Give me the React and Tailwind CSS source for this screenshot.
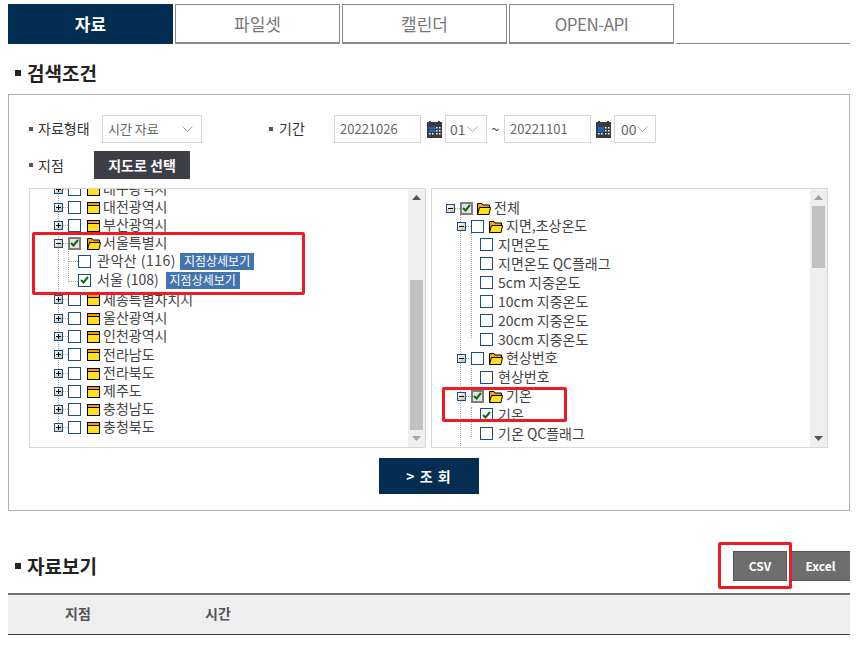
import React from "react";

const font = { fontFamily: '"Noto Sans CJK KR", "Noto Sans", sans-serif' };

function Bullet({ big }) {
  return <span className={big ? "w-[6px] h-[6px] bg-[#222] shrink-0" : "w-1 h-1 bg-[#555] shrink-0"} />;
}

function Chevron() {
  return (
    <svg width="11" height="7" viewBox="0 0 11 7" className="shrink-0">
      <path d="M0.5 0.5 L5.5 5.5 L10.5 0.5" fill="none" stroke="#a8a8a8" strokeWidth="1" />
    </svg>
  );
}

function Calendar() {
  return (
    <svg width="15" height="17" viewBox="0 0 15 17" className="shrink-0">
      <rect x="0" y="1" width="15" height="16" fill="#3a3a42" />
      <rect x="2" y="0" width="2" height="3" fill="#3a3a42" />
      <rect x="11" y="0" width="2" height="3" fill="#3a3a42" />
      <rect x="2" y="6" width="6" height="5" fill="#1e6fd9" />
      <path d="M4 6v5M6 6v5M2 8.5h6" stroke="#0c4aa0" strokeWidth="0.6" />
      <path d="M9 6h1.5v1.5H9zM12 6h1.5v1.5H12zM9 9h1.5v1.5H9zM12 9h1.5v1.5H12zM2 12h1.5v1.5H2zM5 12h1.5v1.5H5zM9 12h1.5v1.5H9zM12 12h1.5v1.5H12z" fill="#fff" />
    </svg>
  );
}

function Expander({ open }) {
  return (
    <span className="relative w-[9px] h-[9px] shrink-0 border border-[#1a4f7f] bg-gradient-to-br from-white to-[#c9bda5] flex items-center justify-center">
      <span className="absolute w-[5px] h-px bg-black" />
      {!open && <span className="absolute w-px h-[5px] bg-black" />}
    </span>
  );
}

function Check({ state }) {
  if (state === "partial") {
    return (
      <span className="w-[13px] h-[13px] shrink-0 border-2 border-[#7d7d7d] bg-[#e4e4e4] flex items-center justify-center">
        <svg width="9" height="8" viewBox="0 0 9 8">
          <path d="M1 4 L3.5 6.5 L8 1" fill="none" stroke="#0a6a14" strokeWidth="2" />
        </svg>
      </span>
    );
  }
  return (
    <span className="w-[13px] h-[13px] shrink-0 border border-[#1a4f7f] bg-white flex items-center justify-center">
      {state === "on" && (
        <svg width="9" height="8" viewBox="0 0 9 8">
          <path d="M1 4 L3.5 6.5 L8 1" fill="none" stroke="#0a6a14" strokeWidth="2" />
        </svg>
      )}
    </span>
  );
}

function Folder({ open }) {
  if (open) {
    return (
      <svg width="14" height="13" viewBox="0 0 14 13" className="shrink-0">
        <path d="M0.5 12.5 V1.5 H5 L6 3 H12.5 V5" fill="#ffa500" stroke="#000" />
        <path d="M0.5 12.5 L2.5 5.5 H13.5 L12 12.5 Z" fill="#ffe01a" stroke="#000" />
      </svg>
    );
  }
  return (
    <svg width="14" height="13" viewBox="0 0 14 13" className="shrink-0">
      <rect x="0" y="1" width="13" height="12" fill="#000" />
      <rect x="1" y="2" width="11" height="2" fill="#ff9a00" />
      <rect x="1" y="5" width="11" height="7" fill="#ffe01a" />
    </svg>
  );
}

function Badge({ className }) {
  return (
    <span className={"h-[17px] w-[74px] bg-[#4474ae] text-white text-xs leading-none flex items-center justify-center " + className}>
      지점상세보기
    </span>
  );
}

function Scrollbar({ thumb, upFill, downFill }) {
  return (
    <div className="w-[17px] shrink-0 bg-[#efefef] flex flex-col items-center">
      <div className="h-[17px] flex items-center justify-center shrink-0">
        <svg width="9" height="5" viewBox="0 0 9 5"><path d="M4.5 0 L9 5 H0 Z" fill={upFill} /></svg>
      </div>
      <div className={"w-[13px] bg-[#c1c1c1] " + thumb} />
      <div className="mt-auto h-[17px] flex items-center justify-center shrink-0">
        <svg width="9" height="5" viewBox="0 0 9 5"><path d="M0 0 H9 L4.5 5 Z" fill={downFill} /></svg>
      </div>
    </div>
  );
}

function SidoRow({ name, open, check, h = "h-[18px]" }) {
  return (
    <div className={"flex items-center pl-6 " + h}>
      <Expander open={open} />
      <span className="w-[5px] h-0 border-t border-dotted border-[#aaa]" />
      <Check state={check} />
      <span className="w-[6px]" />
      <Folder open={open} />
      <span className="ml-[2px] mb-[2px] text-sm leading-4 whitespace-nowrap">{name}</span>
    </div>
  );
}

function StationRow({ name, check, h, nameClass, badgeMargin }) {
  return (
    <div className={"flex items-center pl-[48px] " + h}>
      <Check state={check} />
      <span className={"ml-[6px] mb-[2px] text-sm leading-4 whitespace-nowrap " + nameClass}>{name}</span>
      <Badge className={badgeMargin} />
    </div>
  );
}

function GroupRow({ name, check, pad, gap, h = "h-[18px]" }) {
  return (
    <div className={"flex items-center " + pad + " " + h}>
      <Expander open />
      <span className="w-[5px] h-0 border-t border-dotted border-[#aaa]" />
      <Check state={check} />
      <span className={gap} />
      <Folder open />
      <span className="ml-[3px] mb-[2px] text-sm leading-4 whitespace-nowrap">{name}</span>
    </div>
  );
}

function LeafRow({ name, check, h = "h-[19px]" }) {
  return (
    <div className={"flex items-center pl-[48px] " + h}>
      <Check state={check} />
      <span className="ml-[5px] mb-[2px] text-sm leading-4 whitespace-nowrap">{name}</span>
    </div>
  );
}

function Tab({ label, active, textClass = "" }) {
  return (
    <div
      className={
        active
          ? "w-[165px] h-10 bg-[#032e51] text-white font-bold text-[17px] flex items-center justify-center"
          : "w-[165px] h-10 border border-[#8c8c8c] border-b-2 text-[#777] text-[17px] flex items-center justify-center"
      }
    >
      <span className={textClass}>{label}</span>
    </div>
  );
}

function RedBox({ className }) {
  return <div className={"absolute border-[3px] border-[#ed1c24] rounded-[2px] " + className} />;
}

export default function App() {
  return (
    <div className="relative w-[856px] h-[645px] overflow-hidden bg-white pl-2 pr-[6px] pt-1 text-[#444]" style={font}>
      {/* tabs */}
      <div className="flex gap-[2px]">
        <Tab label="자료" active />
        <Tab label="파일셋" />
        <Tab label="캘린더" />
        <Tab label="OPEN-API" textClass="tracking-[-0.5px]" />
        <div className="flex-1 h-10 border-b border-[#8c8c8c]" />
      </div>

      <div className="h-[50px] pt-2 pl-[7px] flex items-center gap-[6px]">
        <Bullet big />
        <h2 className="text-[19px] font-bold text-[#222]">검색조건</h2>
      </div>

      {/* search box */}
      <div className="border border-[#b0b0b0] h-[417px] pt-5 pl-5">
        <div className="flex items-center h-7 text-sm">
          <div className="w-[73px] flex items-center gap-[5px] text-[#333]">
            <Bullet />
            <span className="mb-[2px] leading-4">자료형태</span>
          </div>
          <div className="w-[100px] h-7 border border-[#d5d5d5] pl-[5px] pr-[8px] flex items-center justify-between text-[13px] text-[#666]">
            <span>시간 자료</span>
            <Chevron />
          </div>
          <div className="ml-[67px] w-[65px] flex items-center gap-[6px] text-[#333]">
            <Bullet />
            <span className="mb-[2px] leading-4">기간</span>
          </div>
          <div className="w-[87px] h-7 border border-[#d5d5d5] pl-[5px] flex items-center text-[13px] text-[#666]">20221026</div>
          <span className="ml-[6px]"><Calendar /></span>
          <div className="ml-[3px] w-[42px] h-7 border border-[#d5d5d5] pl-[4px] pr-[8px] flex items-center justify-between text-[#666]">
            <span>01</span>
            <Chevron />
          </div>
          <span className="w-[17px] text-center">~</span>
          <div className="w-[87px] h-7 border border-[#d5d5d5] pl-[5px] flex items-center text-[13px] text-[#666]">20221101</div>
          <span className="ml-[5px]"><Calendar /></span>
          <div className="ml-[3px] w-[42px] h-7 border border-[#d5d5d5] pl-[6px] pr-[8px] flex items-center justify-between text-[#666]">
            <span>00</span>
            <Chevron />
          </div>
        </div>

        <div className="flex items-center h-7 mt-2 text-sm">
          <div className="w-[65px] flex items-center gap-[5px] text-[#333]">
            <Bullet />
            <span className="leading-4">지점</span>
          </div>
          <button className="w-[96px] h-7 bg-[#3e3e46] text-white font-bold text-sm">지도로 선택</button>
        </div>

        {/* trees */}
        <div className="flex gap-[5px] mt-[9px] h-[260px]">
          <div className="relative w-[397px] border border-[#d8d8d8] flex overflow-hidden">
            <div className="relative flex-1 overflow-hidden">
              <div className="absolute left-[28px] top-0 h-[242px] border-l border-dotted border-[#aaa]" />
              <div className="absolute left-[38px] top-[62px] h-[31px] border-l border-dotted border-[#aaa]" />
              <div className="absolute left-[38px] top-[72px] w-[10px] border-t border-dotted border-[#aaa]" />
              <div className="absolute left-[38px] top-[92px] w-[10px] border-t border-dotted border-[#aaa]" />
              <div className="relative -mt-[9px]">
                <SidoRow name="대구광역시" />
                <SidoRow name="대전광역시" />
                <SidoRow name="부산광역시" />
                <SidoRow name="서울특별시" open check="partial" />
                <StationRow name="관악산 (116)" h="h-[18px]" nameClass="tracking-[0.5px]" badgeMargin="ml-[4px]" />
                <StationRow name="서울 (108)" check="on" h="h-[20px]" nameClass="" badgeMargin="ml-[7px]" />
                <SidoRow name="세종특별자치시" h="h-[19px]" />
                <SidoRow name="울산광역시" />
                <SidoRow name="인천광역시" />
                <SidoRow name="전라남도" h="h-[19px]" />
                <SidoRow name="전라북도" />
                <SidoRow name="제주도" />
                <SidoRow name="충청남도" />
                <SidoRow name="충청북도" />
              </div>
            </div>
            <Scrollbar thumb="mt-[74px] h-[150px]" upFill="#555" downFill="#a3a3a3" />
          </div>

          <div className="relative w-[397px] border border-[#d8d8d8] flex overflow-hidden">
            <div className="relative flex-1 overflow-hidden">
              <div className="absolute left-[28px] top-[23px] h-[240px] border-l border-dotted border-[#aaa]" />
              <div className="absolute left-[39px] top-[41px] h-[108px] border-l border-dotted border-[#aaa]" />
              <div className="absolute left-[39px] top-[179px] h-[17px] border-l border-dotted border-[#aaa]" />
              <div className="absolute left-[39px] top-[218px] h-[30px] border-l border-dotted border-[#aaa]" />
              <div className="relative pt-[10px]">
                <GroupRow name="전체" check="partial" pad="pl-[14px]" gap="w-[4px]" />
                <GroupRow name="지면,초상온도" pad="pl-[25px]" gap="w-[5px]" />
                <LeafRow name="지면온도" />
                <LeafRow name="지면온도 QC플래그" />
                <LeafRow name="5cm 지중온도" />
                <LeafRow name="10cm 지중온도" />
                <LeafRow name="20cm 지중온도" />
                <LeafRow name="30cm 지중온도" />
                <GroupRow name="현상번호" pad="pl-[25px]" gap="w-[5px]" />
                <LeafRow name="현상번호" h="h-[20px]" />
                <GroupRow name="기온" check="partial" pad="pl-[25px]" gap="w-[5px]" />
                <LeafRow name="기온" check="on" />
                <LeafRow name="기온 QC플래그" />
                <div className="h-[2px]" />
                <LeafRow name="최저기온" />
              </div>
            </div>
            <Scrollbar thumb="h-[62px]" upFill="#a3a3a3" downFill="#555" />
          </div>
        </div>

        <div className="flex justify-center mt-[10px] pr-5">
          <button className="w-[100px] h-9 bg-[#032e51] text-white font-bold text-sm tracking-[1px] whitespace-pre">{"> 조 회"}</button>
        </div>
      </div>

      {/* results */}
      <div className="mt-10 h-[30px] pl-[7px] flex items-center gap-[6px]">
        <Bullet big />
        <h2 className="text-[19px] font-bold text-[#222]">자료보기</h2>
        <div className="ml-auto flex gap-[3px]">
          <button className="w-[54px] h-[30px] bg-[#6e6e6e] border border-[#555] text-white text-xs font-bold">CSV</button>
          <button className="w-[60px] h-[30px] bg-[#6e6e6e] border border-[#555] border-r-0 text-white text-xs font-bold">Excel</button>
        </div>
      </div>
      <div className="mt-3 h-[42px] pb-[3px] border-t-2 border-b border-t-[#6c6c74] border-b-[#3f3f3f] bg-[#efefef] flex items-center text-sm font-bold text-[#555]">
        <span className="w-[140px] text-center">지점</span>
        <span className="w-[140px] text-center">시간</span>
      </div>

      {/* red annotation boxes drawn over the capture */}
      <RedBox className="left-[32px] top-[232px] w-[273px] h-[63px]" />
      <RedBox className="left-[442px] top-[387px] w-[125px] h-[35px]" />
      <RedBox className="left-[718px] top-[542px] w-[74px] h-[47px]" />
    </div>
  );
}
